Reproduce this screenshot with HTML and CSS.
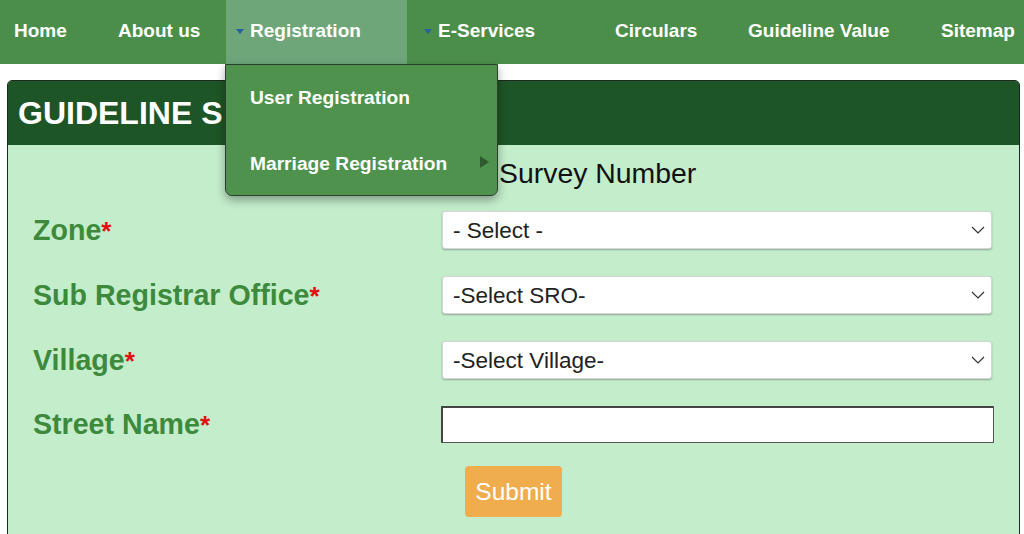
FILE: index.html
```html
<!DOCTYPE html>
<html lang="en">
<head>
<meta charset="utf-8">
<title>Guideline Search</title>
<link rel="stylesheet" href="styles.css">
</head>
<body>
<nav class="topnav">
  <ul class="menu">
    <li class="item item-home"><a href="#">Home</a></li>
    <li class="item item-about"><a href="#">About us</a></li>
    <li class="item item-reg active">
      <a href="#"><span class="caret"></span>Registration</a>
      <ul class="dropdown">
        <li class="drop-item"><a href="#">User Registration</a></li>
        <li class="drop-item"><a href="#">Marriage Registration</a><span class="sub-arrow"></span></li>
      </ul>
    </li>
    <li class="item item-eserv"><a href="#"><span class="caret"></span>E-Services</a></li>
    <li class="item item-circ"><a href="#">Circulars</a></li>
    <li class="item item-guide"><a href="#">Guideline Value</a></li>
    <li class="item item-site"><a href="#">Sitemap</a></li>
  </ul>
</nav>

<main class="page">
  <section class="panel">
    <h1 class="panel-title">GUIDELINE S</h1>
    <div class="panel-body">
      <p class="subtitle">Survey Number</p>
      <form class="form">
        <label class="label">Zone<span class="req">*</span></label>
        <div class="select-wrap">
          <select class="select"><option>- Select -</option></select>
          <svg class="chev" width="14" height="8" viewBox="0 0 14 8"><path d="M1 1 L7 7 L13 1" fill="none" stroke="#333" stroke-width="1.2"/></svg>
        </div>

        <label class="label">Sub Registrar Office<span class="req">*</span></label>
        <div class="select-wrap">
          <select class="select"><option>-Select SRO-</option></select>
          <svg class="chev" width="14" height="8" viewBox="0 0 14 8"><path d="M1 1 L7 7 L13 1" fill="none" stroke="#333" stroke-width="1.2"/></svg>
        </div>

        <label class="label">Village<span class="req">*</span></label>
        <div class="select-wrap">
          <select class="select"><option>-Select Village-</option></select>
          <svg class="chev" width="14" height="8" viewBox="0 0 14 8"><path d="M1 1 L7 7 L13 1" fill="none" stroke="#333" stroke-width="1.2"/></svg>
        </div>

        <label class="label">Street Name<span class="req">*</span></label>
        <input class="text-input" type="text">

        <div class="actions">
          <button class="submit" type="button">Submit</button>
        </div>
      </form>
    </div>
  </section>
</main>
</body>
</html>
```

FILE: styles.css
```css
* { box-sizing: border-box; }

html, body {
  margin: 0;
  padding: 0;
  background: #ffffff;
  font-family: "Liberation Sans", Arial, sans-serif;
  overflow: hidden;
  height: 534px;
}

/* ---------- top navigation ---------- */
.topnav {
  background: #4b8e49;
  height: 64px;
  position: relative;
  z-index: 10;
}

.menu {
  list-style: none;
  margin: 0;
  padding: 0;
  display: grid;
  grid-template-columns: 104px 122px 181px 194px 133px 193px 1fr;
  height: 64px;
}

.item {
  position: relative;
  height: 64px;
}

.item > a {
  display: flex;
  align-items: center;
  height: 62px;
  padding-left: 14px;
  color: #ffffff;
  font-weight: bold;
  font-size: 19px;
  text-decoration: none;
  white-space: nowrap;
}

.item.active { background: #6ea67a; }
.item-reg > a { padding-left: 10px; }
.item-eserv > a { padding-left: 17px; }

.caret {
  display: inline-block;
  width: 0;
  height: 0;
  border-left: 4px solid transparent;
  border-right: 4px solid transparent;
  border-top: 5px solid #2b5f9a;
  margin-right: 6px;
  margin-top: 1px;
}

/* dropdown */
.dropdown {
  position: absolute;
  top: 64px;
  left: -1px;
  width: 273px;
  height: 132px;
  margin: 0;
  padding: 0;
  list-style: none;
  background: #4f924d;
  border: 1px solid #2c3f2c;
  border-radius: 0 0 7px 7px;
  box-shadow: 0 4px 10px rgba(0, 0, 0, 0.35);
}

.drop-item {
  position: relative;
  height: 65px;
  display: flex;
  align-items: center;
  padding-left: 24px;
}

.drop-item:first-child { height: 66px; }

.drop-item a {
  color: #ffffff;
  font-weight: bold;
  font-size: 19.2px;
  text-decoration: none;
  white-space: nowrap;
}

.sub-arrow {
  position: absolute;
  right: 8px;
  top: 25px;
  width: 0;
  height: 0;
  border-top: 6px solid transparent;
  border-bottom: 6px solid transparent;
  border-left: 9px solid #2e5a2d;
}

/* ---------- page ---------- */
.page {
  padding: 16px 4px 0 7px;
}

.panel {
  border: 1px solid #1f2a1f;
  border-radius: 5px;
  overflow: hidden;
  background: #c3edcb;
  height: 480px;
}

.panel-title {
  margin: 0;
  height: 64px;
  background: #1e5526;
  color: #ffffff;
  font-size: 32px;
  font-weight: bold;
  display: flex;
  align-items: center;
  padding-left: 10px;
  padding-top: 1px;
  white-space: nowrap;
}

.panel-body {
  padding: 11px 27px 0 25px;
}

.subtitle {
  margin: 0;
  padding-left: 466px;
  font-size: 28.4px;
  line-height: 34px;
  color: #111;
  white-space: nowrap;
}

.form {
  display: grid;
  grid-template-columns: 409px 550px;
  grid-auto-rows: auto;
  row-gap: 27px;
  align-items: center;
  margin-top: 21px;
}

.label {
  color: #3e8a3c;
  font-weight: bold;
  font-size: 28.6px;
  white-space: nowrap;
}

.req {
  color: #e01010;
  font-size: 26px;
}

.select-wrap {
  position: relative;
  height: 38px;
}

.select {
  appearance: none;
  -webkit-appearance: none;
  width: 100%;
  height: 38px;
  background: #ffffff;
  border: 1px solid #d4d4d4;
  border-radius: 3px;
  box-shadow: 0 1px 2px rgba(0, 0, 0, 0.28);
  font-family: "Liberation Sans", Arial, sans-serif;
  font-size: 22.5px;
  color: #222;
  padding: 0 0 0 10px;
}

.chev {
  position: absolute;
  right: 7px;
  top: 15px;
}

.text-input {
  width: 553px;
  margin-left: -1px;
  height: 37px;
  background: #ffffff;
  border: 1px solid #555;
  border-top: 2px solid #444;
  border-left: 2px solid #444;
  border-radius: 1px;
}

.actions {
  grid-column: 2;
  padding-left: 23px;
  margin-top: -4px;
}

.submit {
  background: #f0ad4e;
  border: none;
  border-radius: 4px;
  color: #ffffff;
  font-family: "Liberation Sans", Arial, sans-serif;
  font-size: 24.5px;
  width: 97px;
  height: 51px;
  padding: 0;
}
```
